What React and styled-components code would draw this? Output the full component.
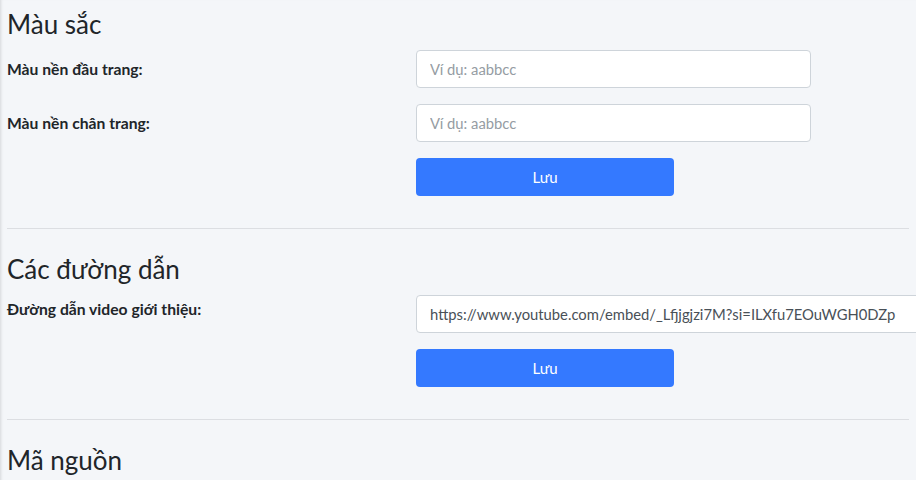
import React from 'react'
import styled, { createGlobalStyle } from 'styled-components'

const GlobalStyle = createGlobalStyle`
    html, body {
        margin: 0;
        padding: 0;
        background: #f4f6f9;
        overflow: hidden;
    }

    body {
        font-family: Lato, "Noto Sans", sans-serif;
        color: #212529;
    }
`

const Page = styled.div`
    min-height: 480px;
    padding: 0 7px;
    box-shadow: inset 3px 0 3px -2px rgba(0, 0, 0, 0.12);
`

const Section = styled.section`
    display: flex;
    flex-direction: column;
`

const Title = styled.h3`
    margin: 0 0 8px;
    padding-top: 6px;
    font-size: 26px;
    line-height: 36px;
    font-weight: 400;
`

const Row = styled.div`
    display: grid;
    grid-template-columns: 409px ${({ wide }) => (wide ? '530px' : '395px')};
    margin-bottom: 16px;
`

const Label = styled.label`
    padding-top: ${({ tight }) => (tight ? '2px' : '7px')};
    font-size: 15.7px;
    line-height: 24px;
    font-weight: 700;
`

const Input = styled.input`
    box-sizing: border-box;
    height: 38px;
    width: 100%;
    padding: 6px 13px;
    border: 1px solid #ced4da;
    border-radius: 4px;
    background: #fff;
    font-family: inherit;
    font-size: 14.8px;
    color: #495057;

    &::placeholder {
        color: #959ca3;
    }
`

const Button = styled.button`
    grid-column: 2;
    width: 258px;
    height: 38px;
    border: none;
    border-radius: 4px;
    background: #3479ff;
    color: #fff;
    font-family: inherit;
    font-size: 15px;
`

const Divider = styled.hr`
    margin: 16px 0;
    border: 0;
    border-top: 1px solid #dcdee2;
`

const App = () => {
    return (
        <Page>
            <GlobalStyle />
            <Section>
                <Title>Màu sắc</Title>
                <Row>
                    <Label>Màu nền đầu trang:</Label>
                    <Input placeholder="Ví dụ: aabbcc" />
                </Row>
                <Row>
                    <Label>Màu nền chân trang:</Label>
                    <Input placeholder="Ví dụ: aabbcc" />
                </Row>
                <Row>
                    <Button>Lưu</Button>
                </Row>
            </Section>
            <Divider />
            <Section>
                <Title>Các đường dẫn</Title>
                <Row wide>
                    <Label tight>Đường dẫn video giới thiệu:</Label>
                    <Input defaultValue="https://www.youtube.com/embed/_Lfjjgjzi7M?si=ILXfu7EOuWGH0DZp" />
                </Row>
                <Row>
                    <Button>Lưu</Button>
                </Row>
            </Section>
            <Divider />
            <Section>
                <Title>Mã nguồn</Title>
            </Section>
        </Page>
    )
}

export default App
